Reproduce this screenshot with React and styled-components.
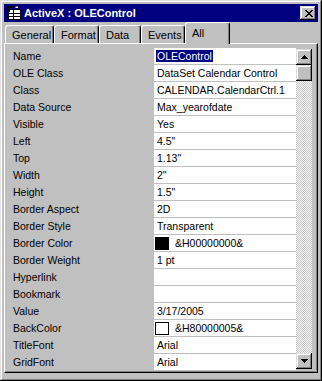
import styled, {createGlobalStyle} from 'styled-components'

const GlobalStyle = createGlobalStyle`
html, body {
  margin: 0;
  padding: 0;
  background: #c0c0c0;
}
* {
  box-sizing: border-box;
}
`

const rows = [
  {label: 'Name', value: 'OLEControl', selected: true},
  {label: 'OLE Class', value: 'DataSet Calendar Control'},
  {label: 'Class', value: 'CALENDAR.CalendarCtrl.1'},
  {label: 'Data Source', value: 'Max_yearofdate'},
  {label: 'Visible', value: 'Yes'},
  {label: 'Left', value: '4.5"'},
  {label: 'Top', value: '1.13"'},
  {label: 'Width', value: '2"'},
  {label: 'Height', value: '1.5"'},
  {label: 'Border Aspect', value: '2D'},
  {label: 'Border Style', value: 'Transparent'},
  {label: 'Border Color', value: '&H00000000&', swatch: '#000'},
  {label: 'Border Weight', value: '1 pt'},
  {label: 'Hyperlink', value: ''},
  {label: 'Bookmark', value: ''},
  {label: 'Value', value: '3/17/2005'},
  {label: 'BackColor', value: '&H80000005&', swatch: '#fff'},
  {label: 'TitleFont', value: 'Arial'},
  {label: 'GridFont', value: 'Arial'},
]

const tabs = [
  {name: 'General', w: 49},
  {name: 'Format', w: 45},
  {name: 'Data', w: 42},
  {name: 'Events', w: 44},
  {name: 'All', w: 45, active: true},
]

const closeGlyph = [
  '##....##',
  '.##..##.',
  '..####..',
  '...##...',
  '..####..',
  '.##..##.',
  '##....##',
]

// little property-sheet icon in the caption
const SheetIcon = () => (
  <svg width="16" height="16" viewBox="0 0 16 16" shapeRendering="crispEdges">
    <rect x="2.5" y="4.5" width="12" height="10" fill="#fff" stroke="#000" />
    <line x1="3" y1="8.5" x2="14" y2="8.5" stroke="#000" />
    <line x1="3" y1="11.5" x2="14" y2="11.5" stroke="#000" />
    <line x1="7.5" y1="5" x2="7.5" y2="14" stroke="#000" />
    <polygon points="1,1 8,1 8,3 4,3 4,7 1,7" fill="#000" />
    <polygon points="9,1 12,1 12,3 9,3" fill="#fff" stroke="#000" strokeWidth="0.5" />
  </svg>
)

const CloseIcon = () => (
  <svg width="8" height="7" viewBox="0 0 8 7" shapeRendering="crispEdges">
    {closeGlyph.map((line, y) =>
      line.split('').map((c, x) =>
        c === '#' ? <rect key={`${x}-${y}`} x={x} y={y} width="1" height="1" fill="#000" /> : null
      )
    )}
  </svg>
)

const Arrow = ({down}) => (
  <svg width="7" height="4" viewBox="0 0 7 4" shapeRendering="crispEdges">
    {down
      ? <polygon points="0,0 7,0 3.5,4" fill="#000" />
      : <polygon points="3.5,0 7,4 0,4" fill="#000" />}
  </svg>
)

const App = () => {
  return (
    <>
      <GlobalStyle />
      <Window>
        <TitleBar>
          <SheetIcon />
          <Title>ActiveX : OLEControl</Title>
          <CloseButton><CloseIcon /></CloseButton>
        </TitleBar>
        <TabStrip>
          {tabs.map(t => (
            <Tab key={t.name} $w={t.w} $active={t.active}>{t.name}</Tab>
          ))}
        </TabStrip>
        <Panel>
          <Grid>
            <Rows>
              {rows.map(r => (
                <Row key={r.label}>
                  <Label>{r.label}</Label>
                  <Value>
                    {r.swatch && <Swatch $color={r.swatch} />}
                    {r.selected ? <Selected>{r.value}</Selected> : r.value}
                  </Value>
                </Row>
              ))}
            </Rows>
            <ScrollBar>
              <ScrollButton><Arrow /></ScrollButton>
              <Thumb />
              <Track />
              <ScrollButton><Arrow down /></ScrollButton>
            </ScrollBar>
          </Grid>
        </Panel>
      </Window>
    </>
  )
}

const raised = `
box-shadow: inset -1px -1px #000, inset 1px 1px #dfdfdf, inset -2px -2px #808080, inset 2px 2px #fff;
`

const Window = styled.div`
width: 322px;
height: 381px;
padding: 4px;
display: flex;
flex-direction: column;
background: #c0c0c0;
font-family: "Liberation Sans", Arial, sans-serif;
font-size: 10.5px;
color: #000;
${raised}
`

const TitleBar = styled.div`
height: 18px;
flex-shrink: 0;
display: flex;
align-items: center;
gap: 2px;
padding: 0 2px 0 2px;
background: #000080;
`

const Title = styled.span`
color: #fff;
font-weight: 700;
font-size: 11px;
white-space: nowrap;
`

const CloseButton = styled.div`
margin-left: auto;
width: 16px;
height: 14px;
display: flex;
align-items: center;
justify-content: center;
padding-left: 1px;
background: #c0c0c0;
${raised}
`

const TabStrip = styled.div`
height: 21px;
flex-shrink: 0;
display: flex;
align-items: flex-end;
padding-left: 1px;
font-size: 11px;
`

const Tab = styled.div`
width: ${p => p.$w}px;
height: ${p => (p.$active ? 22 : 18)}px;
margin-bottom: ${p => (p.$active ? -1 : 0)}px;
padding-left: 6px;
padding-bottom: ${p => (p.$active ? 1 : 0)}px;
display: flex;
align-items: center;
position: relative;
z-index: ${p => (p.$active ? 1 : 0)};
background: #c0c0c0;
border-top: 1px solid #fff;
border-left: 1px solid #fff;
border-right: 1px solid #000;
border-radius: 3px 3px 0 0;
box-shadow: inset -1px 0 #808080;
white-space: nowrap;
`

const Panel = styled.div`
flex-shrink: 0;
padding: 4px 4px 1px 4px;
margin-bottom: 4px;
border-top: 1px solid #fff;
border-left: 1px solid #fff;
border-right: 1px solid #000;
border-bottom: 1px solid #000;
box-shadow: inset -1px -1px #808080;
`

const Grid = styled.div`
display: flex;
height: 323px;
`

const Rows = styled.div`
display: flex;
flex-direction: column;
width: 287px;
`

const Row = styled.div`
display: grid;
grid-template-columns: 145px 142px;
height: 17px;
`

const Label = styled.div`
padding-left: 4px;
height: 16px;
display: flex;
align-items: center;
white-space: nowrap;
`

const Value = styled.div`
background: #fff;
border-bottom: 1px solid #c0c0c0;
padding-left: 3px;
display: flex;
align-items: center;
white-space: nowrap;
overflow: hidden;
`

const Selected = styled.span`
margin-left: -1px;
padding: 0 1px;
line-height: 12px;
background: #000080;
color: #fff;
`

const Swatch = styled.span`
width: 14px;
height: 13px;
margin-left: -2px;
margin-right: 6px;
flex-shrink: 0;
border: 1px solid #000;
background: ${p => p.$color};
`

const ScrollBar = styled.div`
width: 16px;
margin: 1px 0 2px 0;
display: flex;
flex-direction: column;
`

const ScrollButton = styled.div`
width: 16px;
height: 16px;
flex-shrink: 0;
display: flex;
align-items: center;
justify-content: center;
background: #c0c0c0;
${raised}
`

const Thumb = styled.div`
width: 16px;
height: 16px;
flex-shrink: 0;
background: #c0c0c0;
${raised}
`

const Track = styled.div`
flex: 1;
background: repeating-conic-gradient(#c0c0c0 0% 25%, #fff 0% 50%) 0 0 / 2px 2px;
`

export default App
